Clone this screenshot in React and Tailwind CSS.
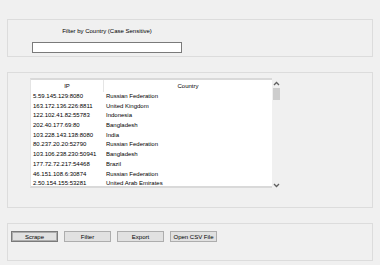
import React from "react";

const rows = [
  ["5.59.145.129:8080", "Russian Federation"],
  ["163.172.136.226:8811", "United Kingdom"],
  ["122.102.41.82:55783", "Indonesia"],
  ["202.40.177.69:80", "Bangladesh"],
  ["103.228.143.138:8080", "India"],
  ["80.237.20.20:52790", "Russian Federation"],
  ["103.106.238.230:50941", "Bangladesh"],
  ["177.72.72.217:54468", "Brazil"],
  ["46.151.108.6:30874", "Russian Federation"],
  ["2.50.154.155:53281", "United Arab Emirates"],
];

function Btn({ label, focused }) {
  return (
    <button
      className={
        focused
          ? "w-[47px] h-[11px] bg-[#e1e1e1] border border-[#7a7a7a] outline outline-1 outline-[#adadad] -outline-offset-2 text-[6px] leading-none text-black whitespace-nowrap"
          : "w-[47px] h-[11px] bg-[#e1e1e1] border border-[#adadad] text-[6px] leading-none text-black whitespace-nowrap"
      }
    >
      {label}
    </button>
  );
}

export default function App() {
  return (
    <div
      className="w-[380px] h-[265px] bg-[#f0f0f0] flex flex-col px-[7px] pt-[19px] gap-[15px] text-black overflow-hidden"
      style={{ fontFamily: '"Liberation Sans", Arial, sans-serif' }}
    >
      {/* filter panel */}
      <div className="h-[38px] border border-[#dcdcdc] flex flex-col pl-[24px] pt-[7px]">
        <div className="w-[150px] flex flex-col items-center gap-[6px]">
          <span className="text-[6px] leading-[9px] text-black">Filter by Country (Case Sensitive)</span>
          <input className="w-[150px] h-[11px] bg-white border border-[#7a7a7a] outline-none" />
        </div>
      </div>

      {/* results panel */}
      <div className="h-[136px] border border-[#dcdcdc] flex pl-[22px] pt-[5px]">
        <div className="w-[242px] h-[110px] bg-white border-t-2 border-b-2 border-[#d9d9d9] border-l border-l-[#e4e4e4] overflow-hidden flex flex-col">
          <div className="flex h-[12px] shrink-0 text-[6px] leading-[12px]">
            <div className="w-[73px] text-center border-r border-[#e5e5e5]">IP</div>
            <div className="flex-1 text-center">Country</div>
          </div>
          {rows.map(([ip, c]) => (
            <div key={ip} className="flex h-[9.7px] shrink-0 text-[6px] leading-[9.7px]">
              <div className="w-[73px] pl-[2px] whitespace-nowrap">{ip}</div>
              <div className="flex-1 pl-[2px] whitespace-nowrap">{c}</div>
            </div>
          ))}
        </div>
        <div className="w-[9px] h-[112px] flex flex-col items-center">
          <svg width="7" height="8" viewBox="0 0 7 8" className="mt-[2px]">
            <path d="M1 5 L3.5 2.5 L6 5" fill="none" stroke="#606060" strokeWidth="1.3" />
          </svg>
          <div className="w-[7px] h-[12px] bg-[#cdcdcd]" />
          <div className="flex-1" />
          <svg width="7" height="8" viewBox="0 0 7 8" className="mb-[1px]">
            <path d="M1 3 L3.5 5.5 L6 3" fill="none" stroke="#606060" strokeWidth="1.3" />
          </svg>
        </div>
      </div>

      {/* button panel */}
      <div className="h-[38px] border border-[#dcdcdc] flex items-start gap-[6px] pl-[3px] pt-[7px]">
        <Btn label="Scrape" focused />
        <Btn label="Filter" />
        <Btn label="Export" />
        <Btn label="Open CSV File" />
      </div>
    </div>
  );
}
